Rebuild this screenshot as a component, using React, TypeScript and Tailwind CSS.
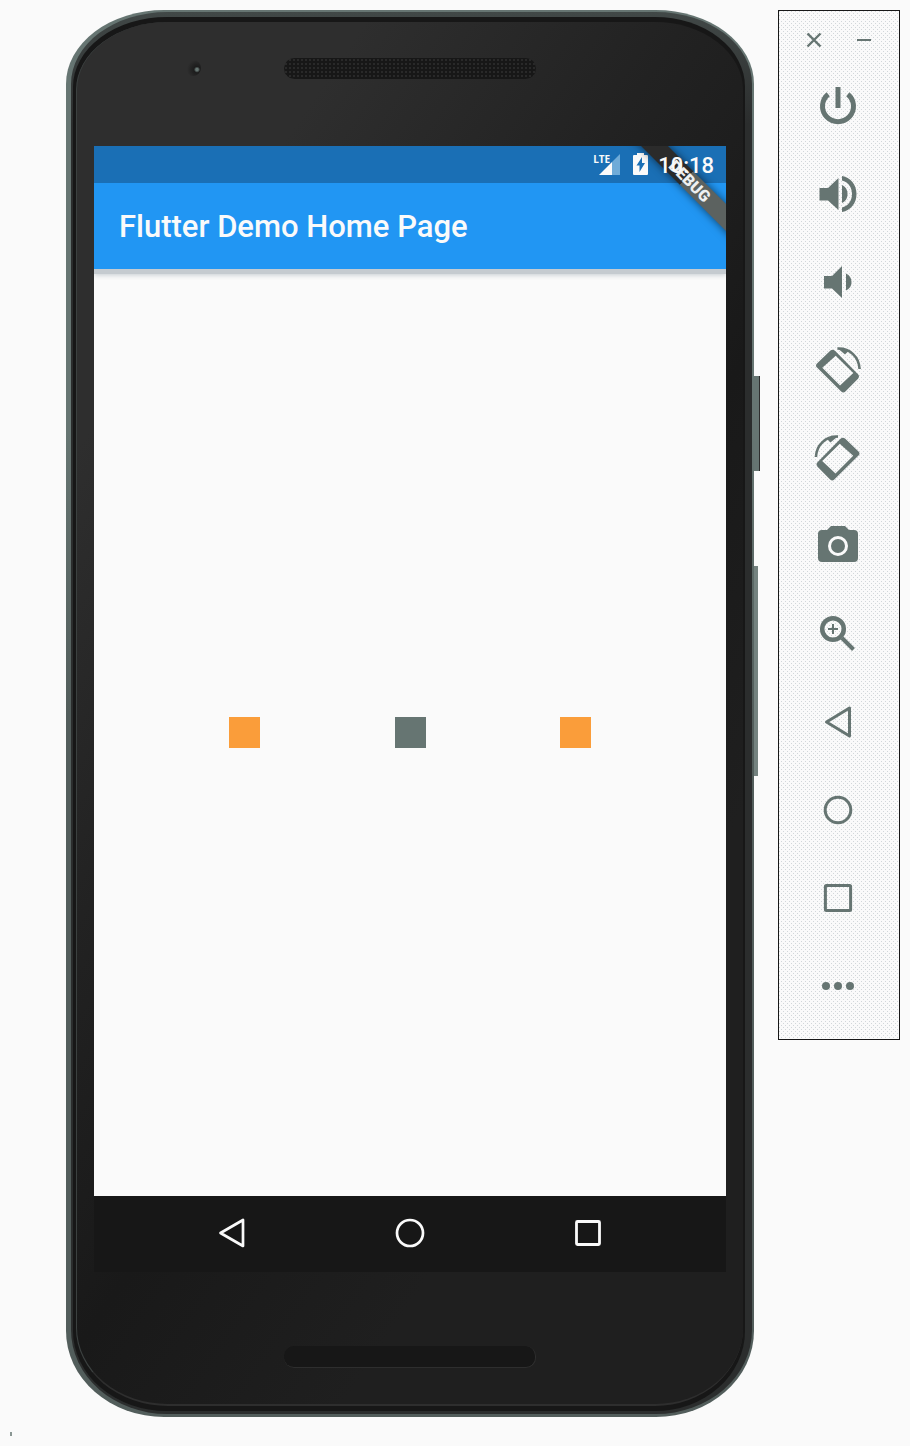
import React from "react";

type IconProps = { children: React.ReactNode; className?: string; box?: string };

function Icon({ children, className = "size-12", box = "0 0 48 48" }: IconProps) {
  return (
    <svg viewBox={box} className={className} fill="none" stroke="currentColor" aria-hidden="true">
      {children}
    </svg>
  );
}

const rotatedDevice = (
  <>
    <path
      d="M16.5 4.6L3 17.4Q1 19.5 3 21.6L27.2 45.6Q29.300 47.600 31.400 45.600L44 32.800Q46 30.500 44 28.300L21 4.800Q18.600 2.800 16.500 4.600ZM21.700 9.700L39.300 27L26 39.500L8.300 21.700Z"
      fill="currentColor"
      fillRule="evenodd"
      stroke="none"
    />
    <path d="M23.5 2.600C36 2 45 11 45.600 23" strokeWidth="2.600" />
    <path d="M23 1.800L31 8.500L35 4.500Z" fill="currentColor" stroke="none" />
  </>
);

const tools: { label: string; icon: React.ReactNode }[] = [
  {
    label: "Power",
    icon: (
      <>
        <path d="M14.2 12.200A15.5 15.5 0 1 0 33.8 12.200" strokeWidth="5" />
        <path d="M24 5V26" strokeWidth="5" />
      </>
    ),
  },
  {
    label: "Volume up",
    icon: (
      <g fill="currentColor" stroke="none">
        <path d="M5.500 18H14L24.500 8V40L14 30.500H5.500Z" />
        <path d="M28 6C37 7.500 42.500 15 42.500 24S37 40.500 28 42V37.500C34 36 38 31 38 24S34 12 28 10.500Z" />
        <path d="M28 15C31.500 16.500 33.500 20 33.500 24S31.500 31.500 28 33Z" />
      </g>
    ),
  },
  {
    label: "Volume down",
    icon: (
      <g fill="currentColor" stroke="none">
        <path d="M10 18H18L28 8V40L18 30.500H10Z" />
        <path d="M32 15.500Q37.500 18 37.500 24T32 32.500Z" />
      </g>
    ),
  },
  { label: "Rotate left", icon: rotatedDevice },
  { label: "Rotate right", icon: <g transform="matrix(-1 0 0 1 47.500 0)">{rotatedDevice}</g> },
  {
    label: "Take screenshot",
    icon: (
      <>
        <path
          d="M8 8H13L17 4H31L35 8H40Q44 8 44 12V36Q44 40 40 40H8Q4 40 4 36V12Q4 8 8 8Z"
          fill="currentColor"
          stroke="none"
        />
        <circle cx="24" cy="24" r="8.500" stroke="#fafafa" strokeWidth="3" />
      </>
    ),
  },
  {
    label: "Zoom",
    icon: (
      <>
        <circle cx="19" cy="19" r="10.800" strokeWidth="4.500" />
        <path d="M28 28L39.500 39.500" strokeWidth="4" />
        <path d="M19 14V24M14 19H24" strokeWidth="2" />
      </>
    ),
  },
  { label: "Back", icon: <path d="M35.500 10V38L12.500 24Z" strokeWidth="3" strokeLinejoin="round" /> },
  { label: "Home", icon: <circle cx="24" cy="24" r="12.800" strokeWidth="3" /> },
  { label: "Overview", icon: <rect x="11.400" y="11.400" width="25.200" height="25.200" rx="1" strokeWidth="3" /> },
  {
    label: "More",
    icon: (
      <g fill="currentColor" stroke="none">
        <circle cx="12" cy="24" r="4" />
        <circle cx="24" cy="24" r="4" />
        <circle cx="36" cy="24" r="4" />
      </g>
    ),
  },
];

function Toolbar() {
  return (
    <aside
      aria-label="Emulator controls"
      className="w-[122px] shrink-0 border border-[#171717] bg-[#fafafa] bg-[conic-gradient(from_270deg_at_1px_1px,#d2d7da_90deg,transparent_0),conic-gradient(from_270deg_at_1px_1px,#d2d7da_90deg,transparent_0)] bg-[size:4px_4px] bg-[position:0_0,2px_2px] pb-[29px] text-[#667572]"
    >
      <div className="flex justify-center gap-[34px] py-[21px]">
        <button aria-label="Close" className="flex">
          <Icon className="size-4" box="0 0 16 16">
            <path d="M1.500 1.500L14.500 14.500M14.500 1.500L1.500 14.500" strokeWidth="2.400" />
          </Icon>
        </button>
        <button aria-label="Minimize" className="flex">
          <Icon className="size-4" box="0 0 16 16">
            <path d="M1 8H15" strokeWidth="2" />
          </Icon>
        </button>
      </div>
      <div className="flex flex-col items-center gap-10 pt-[13px] pr-[2px]">
        {tools.map((tool) => (
          <button key={tool.label} aria-label={tool.label} className="flex">
            <Icon>{tool.icon}</Icon>
          </button>
        ))}
      </div>
    </aside>
  );
}

function StatusBar() {
  return (
    <div className="flex h-[37px] items-center justify-end bg-[#1a6fb5] pr-3 text-[#fafafa]">
      <div className="relative mr-3 h-6 w-7">
        <svg viewBox="0 0 28 24" className="size-full" aria-hidden="true">
          <path d="M6 22L19 9V22Z" fill="currentColor" />
          <path d="M19 9L27 1V22H19Z" fill="#6fabd8" />
        </svg>
        <span className="absolute top-0 left-0 font-['Open_Sans'] text-[10px] leading-3 font-bold">LTE</span>
      </div>
      <svg viewBox="0 0 15 24" className="mr-[10px] h-6 w-[15px]" aria-label="Battery charging">
        <path d="M4 0H11V2H14Q15 2 15 3V21Q15 22 14 22H1Q0 22 0 21V3Q0 2 1 2H4Z" fill="currentColor" />
        <path d="M9 4L3.500 12.500H6.500V19L12 10H9Z" fill="#1a6fb5" />
      </svg>
      <span className="relative z-10 pt-[2px] text-[22px] leading-6 font-medium">10:18</span>
    </div>
  );
}

function Screen() {
  return (
    <main className="relative flex flex-1 flex-col overflow-hidden bg-[#fafafa]">
      <StatusBar />
      <header className="flex h-[86px] items-center bg-[#2196f3] px-[25px] pt-[2px] shadow-[0_5px_0_#c5cbd0,0_6px_5px_#c5cbd0]">
        <h1 className="text-[31px] leading-9 font-medium text-[#fafafa]">Flutter Demo Home Page</h1>
      </header>
      <div className="flex flex-1 items-center justify-evenly">
        <div className="size-[31px] bg-[#fa9d3a]" />
        <div className="size-[31px] bg-[#667572]" />
        <div className="size-[31px] bg-[#fa9d3a]" />
      </div>
      <div className="absolute top-[20px] right-[-48px] flex h-[19px] w-[180px] rotate-45 items-center justify-center bg-[linear-gradient(90deg,#2b2b2b_52%,#5c6260_52%)] pl-4 text-[16px] leading-5 font-black text-[#eef0f1] shadow-[0_0_9px_#0009]">
        DEBUG
      </div>
    </main>
  );
}

function NavigationBar() {
  return (
    <nav className="flex h-[76px] items-center justify-center gap-[146px] bg-[#171717] pb-[2px] text-[#fafafa]">
      <button aria-label="Back" className="flex">
        <Icon className="size-8" box="0 0 32 32">
          <path d="M27 3V29L4.500 16Z" strokeWidth="2.700" strokeLinejoin="round" />
        </Icon>
      </button>
      <button aria-label="Home" className="flex">
        <Icon className="size-8" box="0 0 32 32">
          <circle cx="16" cy="16" r="13" strokeWidth="2.700" />
        </Icon>
      </button>
      <button aria-label="Recent apps" className="flex">
        <Icon className="size-8" box="0 0 32 32">
          <rect x="4.500" y="4.500" width="23" height="23" rx="1" strokeWidth="2.800" />
        </Icon>
      </button>
    </nav>
  );
}

function Phone() {
  return (
    <div className="relative min-w-0 flex-1">
      <div className="absolute top-[366px] right-[-6px] h-[95px] w-3 border-r border-[#2e2e2e] bg-[#667572]" />
      <div className="absolute top-[556px] right-[-4px] h-[210px] w-3 bg-[#74827f]" />
      <div className="relative rounded-[98px_98px_98px_98px/74px_74px_86px_86px] bg-[linear-gradient(#667572_30%,#525d5b_50%)] pt-[2px] pr-[2px] pb-[3px] pl-[5px]">
        <div className="rounded-[96px_96px_96px_96px/72px_72px_84px_84px] bg-[linear-gradient(#414847,#2b2d2d_8%)] pt-[5px] pr-[7px] pb-[3px] pl-[2px]">
          <div className="rounded-[94px_90px_90px_94px/70px_70px_80px_80px] bg-[#171717] pt-[5px] pr-[2px] pb-[5px] pl-[3px]">
            <div className="flex flex-col rounded-[92px_88px_88px_92px/68px_68px_78px_78px] border-b-2 border-l border-b-[#2e2e2e] border-l-[#3c4140] bg-[linear-gradient(124deg,#2e2e2e_18%,#222222_38%,#191919_56%,#1f1f1f_75%)] pr-[17px] pl-[17px]">
              <div className="grid h-[124px] grid-cols-[1fr_252px_1fr] items-start pt-9">
                <div className="flex pl-[91px]">
                  <div className="mt-[2px] size-4 rounded-full bg-[radial-gradient(circle_at_75%_60%,#667572_8%,#1c1c1c_20%,#2e2e2e_65%)]" />
                </div>
                <div className="h-[21px] rounded-full bg-[#171717] bg-[radial-gradient(#292929_1px,transparent_1px)] bg-[size:4px_4px]" />
              </div>
              <div className="flex h-[1050px] flex-col">
                <Screen />
              </div>
              <NavigationBar />
              <div className="flex h-[132px] justify-center pt-[74px]">
                <div className="h-[22px] w-[252px] rounded-[10px] border-r border-b border-[#2e2e2e] bg-[#171717]" />
              </div>
            </div>
          </div>
        </div>
      </div>
    </div>
  );
}

export default function App() {
  return (
    <div className="relative min-h-[1446px] bg-[#fafafa] pt-[10px] pr-[10px] pl-[66px] font-[Roboto,sans-serif]">
      <div className="flex items-start gap-6">
        <Phone />
        <Toolbar />
      </div>
      <div className="absolute bottom-[10px] left-[10px] h-1 w-[2px] bg-[#8a9693]" />
    </div>
  );
}
